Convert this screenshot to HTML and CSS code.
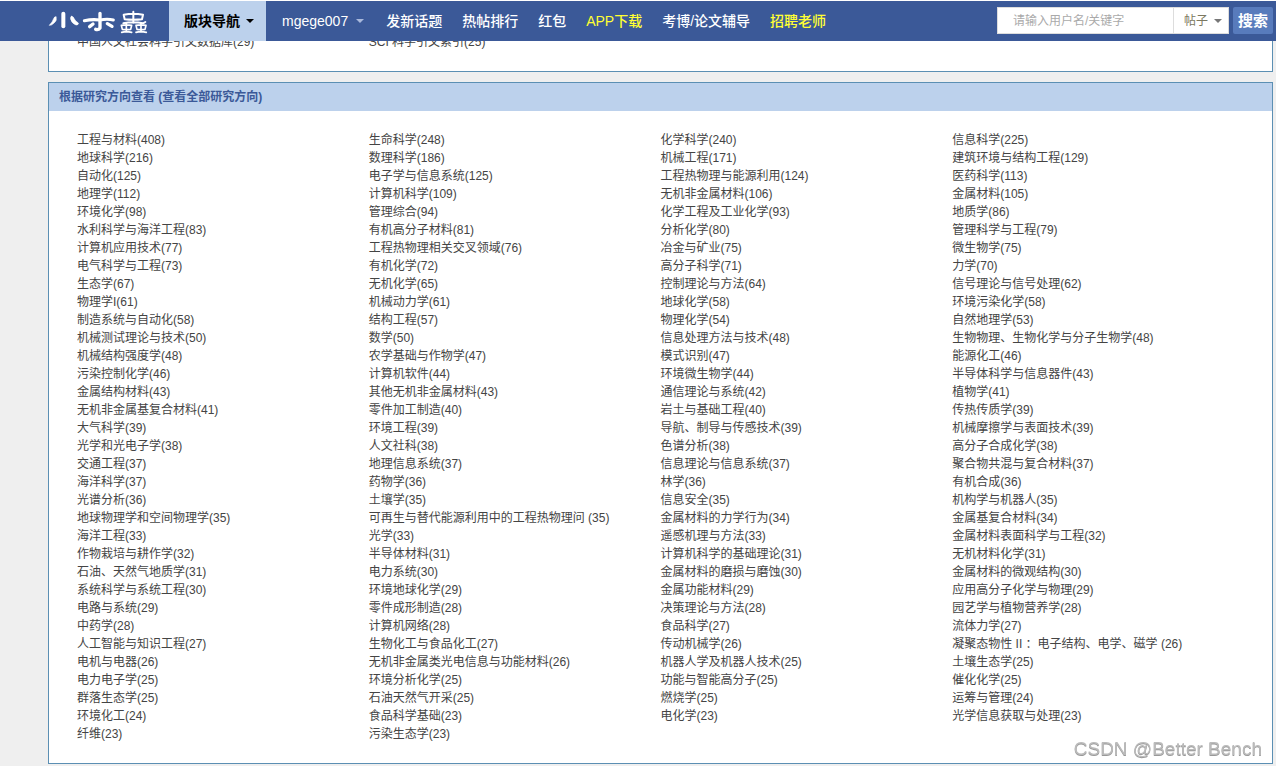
FILE: index.html
```html
<!DOCTYPE html>
<html lang="zh-CN">
<head>
<meta charset="utf-8">
<title>小木虫</title>
<link rel="stylesheet" href="styles.css">
</head>
<body>
<header class="topbar">
  <a class="logo" href="#" aria-label="小木虫">
    <svg viewBox="0 0 330 102" width="110" height="34" aria-hidden="true">
      <g fill="none" stroke="#fff" stroke-linecap="round" stroke-linejoin="round">
        <path d="M36 39Q40 50 30 57Q22 65 16 64Q26 54 29 44Q31 37 36 39Z" fill="#fff" stroke-width="2"/>
        <path d="M58 29V67" stroke-width="12"/>
        <path d="M82 37Q88 36 91 45Q94 52 103 57Q104 63 96 63Q82 57 80 45Q79 39 82 37Z" fill="#fff" stroke-width="2"/>
        <path d="M121 50Q145 45 168 48Q190 44 208 48" stroke-width="9"/>
        <path d="M168 28V72Q163 79 155 76" stroke-width="10"/>
        <path d="M147 60L137 68M190 59L204 67" stroke-width="10"/>
        <path d="M239 32Q268 27 297 32L294 46Q268 49 242 46ZM268 23V56M238 58Q268 52 297 58L304 54" stroke-width="6"/>
        <path d="M232 64Q247 61 263 64L260 76Q247 78 235 76ZM247 58V84M233 85Q247 81 263 85M276 64Q290 61 306 64L303 76Q290 78 279 76ZM291 58V84M276 85Q290 81 307 85" stroke-width="5"/>
      </g>
    </svg>
  </a>
  <nav class="nav">
    <button type="button" class="boards">版块导航<span class="caret"></span></button>
    <button type="button" class="user">mgege007<span class="caret"></span></button>
    <a href="#">发新话题</a>
    <a href="#">热帖排行</a>
    <a href="#">红包</a>
    <a href="#" class="hot">APP下载</a>
    <a href="#">考博/论文辅导</a>
    <a href="#" class="hot">招聘老师</a>
  </nav>
  <form class="search">
    <div class="field">
      <input type="text" aria-label="搜索关键字" placeholder="请输入用户名/关键字">
      <div class="kind">
        <select aria-label="搜索类型"><option>帖子</option></select>
        <span class="caret"></span>
      </div>
    </div>
    <button type="button" class="go">搜索</button>
  </form>
</header>
<main class="content">
  <section class="panel">
    <ul class="topics">
      <li><a href="#">中国人文社会科学引文数据库(29)</a></li>
      <li><a href="#">SCI 科学引文索引(25)</a></li>
    </ul>
  </section>
  <section class="panel">
    <h2>根据研究方向查看 (<a href="#">查看全部研究方向</a>)</h2>
    <ul class="topics">
      <li><a href="#">工程与材料(408)</a></li><li><a href="#">生命科学(248)</a></li><li><a href="#">化学科学(240)</a></li><li><a href="#">信息科学(225)</a></li>
      <li><a href="#">地球科学(216)</a></li><li><a href="#">数理科学(186)</a></li><li><a href="#">机械工程(171)</a></li><li><a href="#">建筑环境与结构工程(129)</a></li>
      <li><a href="#">自动化(125)</a></li><li><a href="#">电子学与信息系统(125)</a></li><li><a href="#">工程热物理与能源利用(124)</a></li><li><a href="#">医药科学(113)</a></li>
      <li><a href="#">地理学(112)</a></li><li><a href="#">计算机科学(109)</a></li><li><a href="#">无机非金属材料(106)</a></li><li><a href="#">金属材料(105)</a></li>
      <li><a href="#">环境化学(98)</a></li><li><a href="#">管理综合(94)</a></li><li><a href="#">化学工程及工业化学(93)</a></li><li><a href="#">地质学(86)</a></li>
      <li><a href="#">水利科学与海洋工程(83)</a></li><li><a href="#">有机高分子材料(81)</a></li><li><a href="#">分析化学(80)</a></li><li><a href="#">管理科学与工程(79)</a></li>
      <li><a href="#">计算机应用技术(77)</a></li><li><a href="#">工程热物理相关交叉领域(76)</a></li><li><a href="#">冶金与矿业(75)</a></li><li><a href="#">微生物学(75)</a></li>
      <li><a href="#">电气科学与工程(73)</a></li><li><a href="#">有机化学(72)</a></li><li><a href="#">高分子科学(71)</a></li><li><a href="#">力学(70)</a></li>
      <li><a href="#">生态学(67)</a></li><li><a href="#">无机化学(65)</a></li><li><a href="#">控制理论与方法(64)</a></li><li><a href="#">信号理论与信号处理(62)</a></li>
      <li><a href="#">物理学I(61)</a></li><li><a href="#">机械动力学(61)</a></li><li><a href="#">地球化学(58)</a></li><li><a href="#">环境污染化学(58)</a></li>
      <li><a href="#">制造系统与自动化(58)</a></li><li><a href="#">结构工程(57)</a></li><li><a href="#">物理化学(54)</a></li><li><a href="#">自然地理学(53)</a></li>
      <li><a href="#">机械测试理论与技术(50)</a></li><li><a href="#">数学(50)</a></li><li><a href="#">信息处理方法与技术(48)</a></li><li><a href="#">生物物理、生物化学与分子生物学(48)</a></li>
      <li><a href="#">机械结构强度学(48)</a></li><li><a href="#">农学基础与作物学(47)</a></li><li><a href="#">模式识别(47)</a></li><li><a href="#">能源化工(46)</a></li>
      <li><a href="#">污染控制化学(46)</a></li><li><a href="#">计算机软件(44)</a></li><li><a href="#">环境微生物学(44)</a></li><li><a href="#">半导体科学与信息器件(43)</a></li>
      <li><a href="#">金属结构材料(43)</a></li><li><a href="#">其他无机非金属材料(43)</a></li><li><a href="#">通信理论与系统(42)</a></li><li><a href="#">植物学(41)</a></li>
      <li><a href="#">无机非金属基复合材料(41)</a></li><li><a href="#">零件加工制造(40)</a></li><li><a href="#">岩土与基础工程(40)</a></li><li><a href="#">传热传质学(39)</a></li>
      <li><a href="#">大气科学(39)</a></li><li><a href="#">环境工程(39)</a></li><li><a href="#">导航、制导与传感技术(39)</a></li><li><a href="#">机械摩擦学与表面技术(39)</a></li>
      <li><a href="#">光学和光电子学(38)</a></li><li><a href="#">人文社科(38)</a></li><li><a href="#">色谱分析(38)</a></li><li><a href="#">高分子合成化学(38)</a></li>
      <li><a href="#">交通工程(37)</a></li><li><a href="#">地理信息系统(37)</a></li><li><a href="#">信息理论与信息系统(37)</a></li><li><a href="#">聚合物共混与复合材料(37)</a></li>
      <li><a href="#">海洋科学(37)</a></li><li><a href="#">药物学(36)</a></li><li><a href="#">林学(36)</a></li><li><a href="#">有机合成(36)</a></li>
      <li><a href="#">光谱分析(36)</a></li><li><a href="#">土壤学(35)</a></li><li><a href="#">信息安全(35)</a></li><li><a href="#">机构学与机器人(35)</a></li>
      <li><a href="#">地球物理学和空间物理学(35)</a></li><li><a href="#">可再生与替代能源利用中的工程热物理问 (35)</a></li><li><a href="#">金属材料的力学行为(34)</a></li><li><a href="#">金属基复合材料(34)</a></li>
      <li><a href="#">海洋工程(33)</a></li><li><a href="#">光学(33)</a></li><li><a href="#">遥感机理与方法(33)</a></li><li><a href="#">金属材料表面科学与工程(32)</a></li>
      <li><a href="#">作物栽培与耕作学(32)</a></li><li><a href="#">半导体材料(31)</a></li><li><a href="#">计算机科学的基础理论(31)</a></li><li><a href="#">无机材料化学(31)</a></li>
      <li><a href="#">石油、天然气地质学(31)</a></li><li><a href="#">电力系统(30)</a></li><li><a href="#">金属材料的磨损与磨蚀(30)</a></li><li><a href="#">金属材料的微观结构(30)</a></li>
      <li><a href="#">系统科学与系统工程(30)</a></li><li><a href="#">环境地球化学(29)</a></li><li><a href="#">金属功能材料(29)</a></li><li><a href="#">应用高分子化学与物理(29)</a></li>
      <li><a href="#">电路与系统(29)</a></li><li><a href="#">零件成形制造(28)</a></li><li><a href="#">决策理论与方法(28)</a></li><li><a href="#">园艺学与植物营养学(28)</a></li>
      <li><a href="#">中药学(28)</a></li><li><a href="#">计算机网络(28)</a></li><li><a href="#">食品科学(27)</a></li><li><a href="#">流体力学(27)</a></li>
      <li><a href="#">人工智能与知识工程(27)</a></li><li><a href="#">生物化工与食品化工(27)</a></li><li><a href="#">传动机械学(26)</a></li><li><a href="#">凝聚态物性 II ：电子结构、电学、磁学 (26)</a></li>
      <li><a href="#">电机与电器(26)</a></li><li><a href="#">无机非金属类光电信息与功能材料(26)</a></li><li><a href="#">机器人学及机器人技术(25)</a></li><li><a href="#">土壤生态学(25)</a></li>
      <li><a href="#">电力电子学(25)</a></li><li><a href="#">环境分析化学(25)</a></li><li><a href="#">功能与智能高分子(25)</a></li><li><a href="#">催化化学(25)</a></li>
      <li><a href="#">群落生态学(25)</a></li><li><a href="#">石油天然气开采(25)</a></li><li><a href="#">燃烧学(25)</a></li><li><a href="#">运筹与管理(24)</a></li>
      <li><a href="#">环境化工(24)</a></li><li><a href="#">食品科学基础(23)</a></li><li><a href="#">电化学(23)</a></li><li><a href="#">光学信息获取与处理(23)</a></li>
      <li><a href="#">纤维(23)</a></li><li><a href="#">污染生态学(23)</a></li>
    </ul>
  </section>
</main>
<div class="watermark">CSDN @Better Bench</div>
</body>
</html>
```
FILE: styles.css
```css
* { box-sizing: border-box; }

body {
  margin: 0;
  background: #efefef;
  color: #444;
  font: 12px/18px "Liberation Sans", "Noto Sans CJK SC", sans-serif;
}

a { color: inherit; text-decoration: none; }

button, input, select {
  margin: 0;
  padding: 0;
  border: 0;
  background: none;
  color: inherit;
  font: inherit;
}

.topbar {
  position: fixed;
  z-index: 2;
  top: 0;
  left: 0;
  right: 0;
  display: flex;
  align-items: center;
  height: 41px;
  padding: 0 3px 0 44px;
  border-top: 1px solid #fff;
  background: #3b5998;
  color: #fff;
}

.logo { display: flex; width: 125px; }

.nav {
  display: flex;
  flex: 1;
  align-self: stretch;
  font-size: 14px;
  font-weight: 500;
  white-space: nowrap;
}

.nav a, .nav button {
  display: flex;
  align-items: center;
  padding: 0 10px;
}

.nav .boards {
  width: 97px;
  padding: 0 0 0 15px;
  background: #bcd1ec;
  color: #000;
  font-weight: 700;
}

.nav .user { padding: 0 12px 0 16px; }
.nav .hot { color: #ff3; }

.caret {
  margin-left: 6px;
  border: 4px solid transparent;
  border-top-color: currentColor;
  border-bottom: 0;
}

.user .caret { margin-left: 8px; color: #a9b9dc; }

.search { display: flex; gap: 4px; padding-bottom: 1px; }

.field {
  display: flex;
  height: 27px;
  border: 1px solid #ddd;
  background: #fff;
}

.field input { width: 175px; padding: 0 15px; color: #444; }
.field input::placeholder { color: #aaa; opacity: 1; }

.kind {
  display: flex;
  align-items: center;
  width: 55px;
  padding-left: 10px;
  border-left: 1px solid #ddd;
  color: #7b7860;
}

.kind select { appearance: none; width: 24px; }
.kind .caret { color: #777; }

.go {
  width: 40px;
  height: 27px;
  border-radius: 2px;
  background: #587bbc;
  font-size: 15px;
  font-weight: 700;
}

.content {
  display: flex;
  flex-direction: column;
  gap: 10px;
  padding: 12px 3px 2px 48px;
}

.panel { border: 1px solid #5b8fb3; background: #fff; }

.panel h2 {
  margin: 0;
  padding: 0 10px;
  background: #bcd1ec;
  color: #3b5998;
  font-size: 12px;
  font-weight: 700;
  line-height: 28px;
}

.topics {
  display: grid;
  grid-template-columns: repeat(4, 1fr);
  margin: 0;
  padding: 20px 28px;
  list-style: none;
  white-space: nowrap;
}

.topics li { height: 18px; }

.watermark {
  position: fixed;
  right: 14px;
  bottom: 5px;
  color: #bbb;
  font-size: 19px;
  line-height: 24px;
  text-shadow: 0 1px 0 #999;
}
```
